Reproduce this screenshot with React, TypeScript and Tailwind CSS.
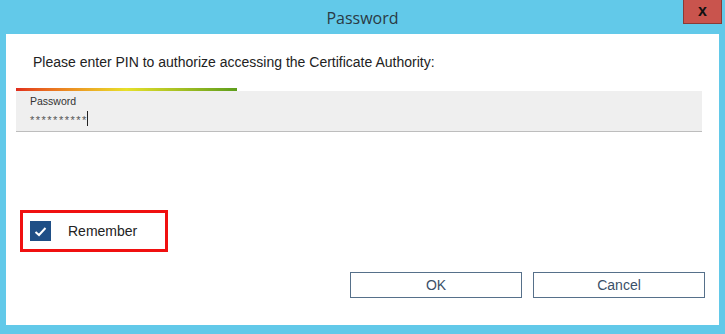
export default function App() {
  return (
    <div className="w-[725px] h-[334px] bg-[#62c9e9] flex flex-col font-['Liberation_Sans',Arial,sans-serif]">
      <div className="h-[34px] relative flex items-center justify-center shrink-0">
        <span className="text-[16px] text-[#2a3a44] font-['Open_Sans','Noto_Sans',sans-serif] pt-[1px]">Password</span>
        <div className="absolute right-[3px] top-0 w-[39px] h-[24px] bg-[#c9544d] border border-[#8a3a35] border-t-0 flex items-center justify-center">
          <span className="text-[16px] font-bold text-[#111] leading-none pb-[2px]">x</span>
        </div>
      </div>
      <div className="flex-1 mx-[6px] mb-[9px] bg-white flex flex-col">
        <p className="pt-[20px] pl-[27px] text-[14px] leading-[16px] text-[#222]">
          Please enter PIN to authorize accessing the Certificate Authority:
        </p>
        <div className="ml-[10px] mt-[18px] w-[221px] h-[3px] bg-gradient-to-r from-[#e02a1c] via-[#e6e02a] to-[#5d9e1c]" />
        <div className="ml-[10px] w-[686px] h-[41px] bg-[#efefef] border-b border-[#bdbdbd] pl-[14px] pt-[4px]">
          <div className="text-[10.5px] leading-[12px] text-[#333]">Password</div>
          <div className="flex items-center mt-[3px]">
            <span className="text-[11px] leading-[12px] text-[#555] tracking-[1.5px] pt-[4px]">**********</span>
            <span className="w-px h-[15px] bg-[#222] -ml-[1px]" />
          </div>
        </div>
        <div className="mt-[78px] ml-[14px] w-[148px] h-[42px] border-[3px] border-[#f01010] flex items-center pl-[7px]">
          <div className="w-[21px] h-[20px] bg-[#1f4f86] flex items-center justify-center">
            <svg width="13" height="11" viewBox="0 0 13 11">
              <path d="M1.5 6 L5 9 L11.5 2" stroke="white" strokeWidth="2" fill="none" />
            </svg>
          </div>
          <span className="ml-[17px] text-[14px] text-[#222]">Remember</span>
        </div>
        <div className="mt-[20px] flex justify-end gap-[11px] pr-[14px]">
          <button className="w-[172px] h-[26px] border border-[#56708a] bg-white text-[14px] text-[#3a5068]">OK</button>
          <button className="w-[172px] h-[26px] border border-[#56708a] bg-white text-[14px] text-[#3a5068]">Cancel</button>
        </div>
      </div>
    </div>
  );
}
